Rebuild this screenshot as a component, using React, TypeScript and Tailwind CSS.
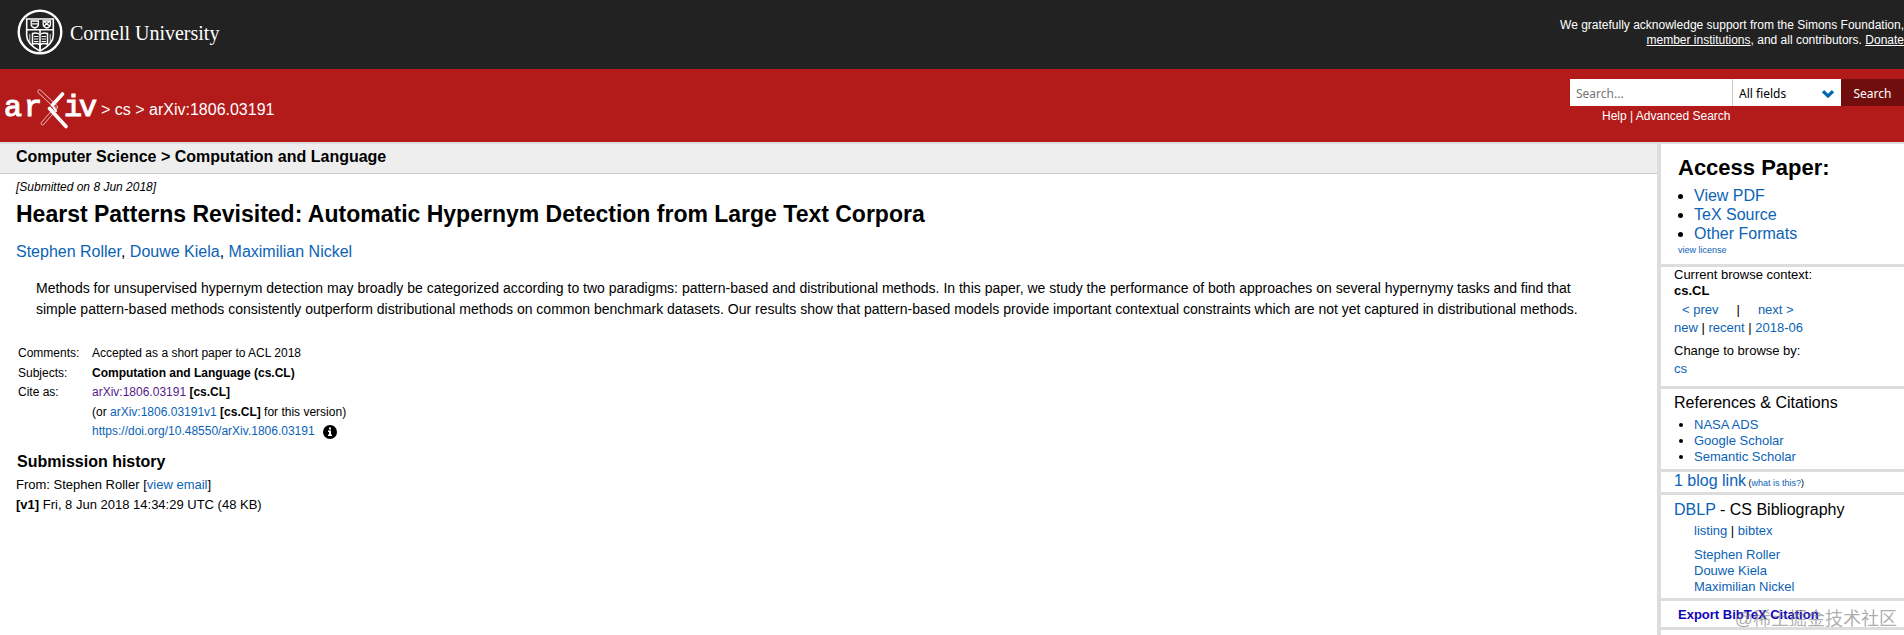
import type { ReactNode } from "react";

const blue = "text-[#0b63b5]";

interface LinkProps {
  children: ReactNode;
  className?: string;
}

function Link({ children, className = blue }: LinkProps) {
  return (
    <a href="#" className={className}>
      {children}
    </a>
  );
}

function CornellSeal() {
  return (
    <svg viewBox="0 0 46 46" className="w-[46px] h-[46px]" fill="none" stroke="#fff" aria-hidden="true">
      <circle cx="23" cy="23" r="21.3" strokeWidth="2.4" />
      <path d="M9.7 10h26.6v16.5c0 7.5-6.5 12-13.3 15.5C16.2 38.500 9.700 34 9.700 26.500z" strokeWidth="1.600" />
      <path d="M10 20.800h26M23 21v3M23 36v6" strokeWidth="1.600" />
      <path
        d="M14.200 12h7.200v3.500c0 1.900-1.700 3-3.600 3.500-1.900-.5-3.600-1.600-3.600-3.500zM26.200 12h7.200v3.500c0 1.900-1.700 3-3.600 3.500-1.900-.5-3.600-1.600-3.600-3.500z"
        strokeWidth="1.300"
      />
      <path d="M14.500 14.800h6.500M27 12.500l5.500 4.500M32.500 12.500l-5.500 4.500" strokeWidth="1.200" />
      <path
        d="M15.500 24.500c2.700-1 5.500-.6 7.500.8 2-1.400 4.800-1.800 7.500-.8v10.500c-2.700-.8-5.500-.5-7.500.8-2-1.300-4.800-1.600-7.500-.8zM23 25v15"
        strokeWidth="1.500"
      />
      <path d="M17 27.500h4.500M17 30h4.500M17 32.500h4.500M24.500 27.500H29M24.500 30H29M24.500 32.500H29" strokeWidth="1.200" />
      <path d="M12.800 25v9M33.200 25v9" strokeWidth=".8" />
    </svg>
  );
}

function ArxivLogo() {
  return (
    <svg viewBox="0 0 92 42" className="w-[92px] h-[42px]" role="img" aria-label="arXiv">
      <g
        fill="#fff"
        stroke="#fff"
        strokeWidth="1.2"
        className="font-['Liberation_Mono',monospace]"
        fontSize="30"
        textAnchor="middle"
      >
        <text x="8" y="29">a</text>
        <text x="28" y="29">r</text>
        <text x="68" y="29">i</text>
        <text x="83" y="29">v</text>
      </g>
      <g fill="none" strokeLinecap="round">
        <path d="M34.500 4.500L51 20" stroke="#f3c0c0" strokeWidth="4.200" />
        <path d="M34.500 4.500L51 20" stroke="#b31b1b" strokeWidth="2.600" />
        <path d="M37.500 36.500L50.500 21.500" stroke="#f3c0c0" strokeWidth="3.600" />
        <path d="M37.500 36.500L50.500 21.500" stroke="#b31b1b" strokeWidth="2.200" />
        <path d="M57.500 7L47.500 18M44.500 21.500L61 39.500" stroke="#fff" strokeWidth="3.600" />
        <path d="M47.500 18.500L51 24" stroke="#fff" strokeWidth="2.200" />
      </g>
    </svg>
  );
}

function Header() {
  return (
    <header className="text-white">
      <div className="flex items-start justify-between bg-[#222] h-[69px]">
        <a href="#" className="flex items-center gap-[7px] pl-[17px] pt-[9px]">
          <CornellSeal />
          <span className="pt-0.5 font-['Liberation_Serif',serif] text-[20px] leading-6">Cornell University</span>
        </a>
        <p className="pt-[18px] text-right text-[12px] leading-[15px]">
          We gratefully acknowledge support from the Simons Foundation,
          <br />
          <Link className="underline">member institutions</Link>, and all contributors.{" "}
          <Link className="underline">Donate</Link>
        </p>
      </div>
      <div className="flex items-start justify-between bg-[#b31b1b] h-[73px]">
        <div className="flex items-start pl-[5px] pt-[18px]">
          <a href="#">
            <ArxivLogo />
          </a>
          <p className="pl-1 pt-[13px] text-[16px] leading-5">
            &gt; <Link className="">cs</Link> &gt; arXiv:1806.03191
          </p>
        </div>
        <form className="pt-[10px]" onSubmit={(e) => e.preventDefault()}>
          <div className="flex h-[27px] font-['Noto_Sans',sans-serif] text-[12px] text-black">
            <input
              type="text"
              aria-label="Search term"
              placeholder="Search..."
              className="w-[162px] bg-white px-1.5 pt-0.5 placeholder:text-[#757575]"
            />
            <div className="relative">
              <select
                aria-label="Field to search"
                className="h-full w-[109px] appearance-none border-l border-[#ccc] bg-white pl-1.5 pt-0.5"
              >
                <option>All fields</option>
              </select>
              <svg viewBox="0 0 12 8" className="pointer-events-none absolute right-[7px] top-[11px] w-3 h-2">
                <path d="M1 1.200L6 6l5-4.800" fill="none" stroke="#0068ac" strokeWidth="3.200" />
              </svg>
            </div>
            <button type="submit" className="w-[63px] bg-[#700e0e] pt-0.5 text-white">
              Search
            </button>
          </div>
          <p className="pl-8 pt-0.5 text-[12px] leading-4">
            <Link className="">Help</Link> | <Link className="">Advanced Search</Link>
          </p>
        </form>
      </div>
    </header>
  );
}

function InfoIcon() {
  return (
    <svg viewBox="0 0 14 14" className="ml-2 inline-block w-[14px] h-[14px]" aria-hidden="true">
      <circle cx="7" cy="7" r="7" />
      <path d="M6 2.500h2v2H6zM5 5.500h3v4h1V11H5V9.500h1V7H5z" fill="#fff" />
    </svg>
  );
}

const metaRows: { label: string; value: ReactNode }[] = [
  { label: "Comments:", value: "Accepted as a short paper to ACL 2018" },
  { label: "Subjects:", value: <b>Computation and Language (cs.CL)</b> },
  {
    label: "Cite as:",
    value: (
      <>
        <Link className="text-[#551a8b]">arXiv:1806.03191</Link> <b>[cs.CL]</b>
      </>
    ),
  },
  {
    label: "",
    value: (
      <>
        (or <Link>arXiv:1806.03191v1</Link> <b>[cs.CL]</b> for this version)
      </>
    ),
  },
  {
    label: "",
    value: (
      <span className="flex items-center">
        <Link>https://doi.org/10.48550/arXiv.1806.03191</Link>
        <InfoIcon />
      </span>
    ),
  },
];

function Paper() {
  return (
    <main className="flex-1 min-w-0">
      <h1 className="h-[30px] border-b border-[#ccc] bg-[#eee] pl-4 text-[16px] font-bold leading-[25px]">
        Computer Science &gt; Computation and Language
      </h1>
      <p className="pl-4 pt-[5px] text-[12px] italic leading-4">[Submitted on 8 Jun 2018]</p>
      <h2 className="pl-4 pt-[3px] text-[23px] font-bold leading-8">
        Hearst Patterns Revisited: Automatic Hypernym Detection from Large Text Corpora
      </h2>
      <p className="pl-4 pt-3 text-[16px] leading-5">
        <Link>Stephen Roller</Link>, <Link>Douwe Kiela</Link>, <Link>Maximilian Nickel</Link>
      </p>
      <p className="pl-9 pr-[50px] pt-4 text-[14px] leading-[21px]">
        Methods for unsupervised hypernym detection may broadly be categorized according to two paradigms:
        pattern-based and distributional methods. In this paper, we study the performance of both approaches on several
        hypernymy tasks and find that simple pattern-based methods consistently outperform distributional methods on
        common benchmark datasets. Our results show that pattern-based models provide important contextual constraints
        which are not yet captured in distributional methods.
      </p>
      <table className="ml-[18px] mt-6 text-[12px]">
        <tbody>
          {metaRows.map((row, i) => (
            <tr key={i} className="leading-[19px] even:leading-5">
              <td className="w-[74px] p-0">{row.label}</td>
              <td className="p-0">{row.value}</td>
            </tr>
          ))}
        </tbody>
      </table>
      <h2 className="pl-[17px] pt-[11px] text-[16px] font-bold leading-5">Submission history</h2>
      <p className="pl-4 pt-[3px] text-[13px] leading-5">
        From: Stephen Roller [<Link>view email</Link>]
        <br />
        <b>[v1]</b> Fri, 8 Jun 2018 14:34:29 UTC (48 KB)
      </p>
    </main>
  );
}

function Sidebar() {
  return (
    <aside className="w-[247px] shrink-0 border-l-4 border-[#ddd] text-[13px] leading-4">
      <section className="h-[123px] border-b-[3px] border-[#ddd] pl-[17px] pt-2.5">
        <h2 className="text-[22px] font-bold leading-7">Access Paper:</h2>
        <ul className="list-disc pl-4 pt-1 text-[16px] leading-[19px]">
          <li><Link>View PDF</Link></li>
          <li><Link>TeX Source</Link></li>
          <li><Link>Other Formats</Link></li>
        </ul>
        <p className="text-[9px] leading-[14px]"><Link>view license</Link></p>
      </section>
      <section className="h-[122px] border-b-[3px] border-[#ddd] pl-[13px]">
        <p>Current browse context:</p>
        <p className="font-bold">cs.CL</p>
        <p className="flex gap-[18px] pl-2 pt-[3px]">
          <Link>&lt; prev</Link>
          <span>|</span>
          <Link>next &gt;</Link>
        </p>
        <p className="pt-0.5">
          <Link>new</Link> | <Link>recent</Link> | <Link>2018-06</Link>
        </p>
        <p className="pt-[7px]">Change to browse by:</p>
        <p className="pt-0.5"><Link>cs</Link></p>
      </section>
      <section className="h-[83px] border-b-[3px] border-[#ddd] pl-[13px] pt-1">
        <h3 className="text-[16px] leading-5">References &amp; Citations</h3>
        <ul className="list-disc pl-5 pt-1">
          <li><Link>NASA ADS</Link></li>
          <li><Link>Google Scholar</Link></li>
          <li><Link>Semantic Scholar</Link></li>
        </ul>
      </section>
      <section className="h-[23px] border-b-[3px] border-[#ddd] pl-[13px] leading-[18px]">
        <Link className="text-[16px] text-[#0b63b5]">1 blog link</Link>
        <span className="text-[9px]"> (<Link>what is this?</Link>)</span>
      </section>
      <section className="h-[106px] border-b-[3px] border-[#ddd] pl-[13px] pt-[5px]">
        <h3 className="text-[16px] leading-5">
          <Link>DBLP</Link> - CS Bibliography
        </h3>
        <p className="pl-5 pt-[3px]">
          <Link>listing</Link> | <Link>bibtex</Link>
        </p>
        <ul className="pl-5 pt-2">
          <li><Link>Stephen Roller</Link></li>
          <li><Link>Douwe Kiela</Link></li>
          <li><Link>Maximilian Nickel</Link></li>
        </ul>
      </section>
      <section className="h-[29px] border-b-[3px] border-[#ddd] pl-[17px] pt-1.5">
        <button type="button" className="block font-bold text-[#1205b8]">Export BibTeX Citation</button>
      </section>
    </aside>
  );
}

export default function App() {
  return (
    <div className="relative flex min-h-screen flex-col overflow-hidden bg-white font-['Liberation_Sans',Arial,sans-serif] text-black">
      <Header />
      <div className="flex flex-1 border-t-2 border-[#ddd]">
        <Paper />
        <Sidebar />
      </div>
      <span className="pointer-events-none absolute bottom-1 right-[7px] font-['Liberation_Sans','Noto_Sans_CJK_SC',sans-serif] text-[18px] leading-6 text-[#777]/60">
        @稀土掘金技术社区
      </span>
    </div>
  );
}
